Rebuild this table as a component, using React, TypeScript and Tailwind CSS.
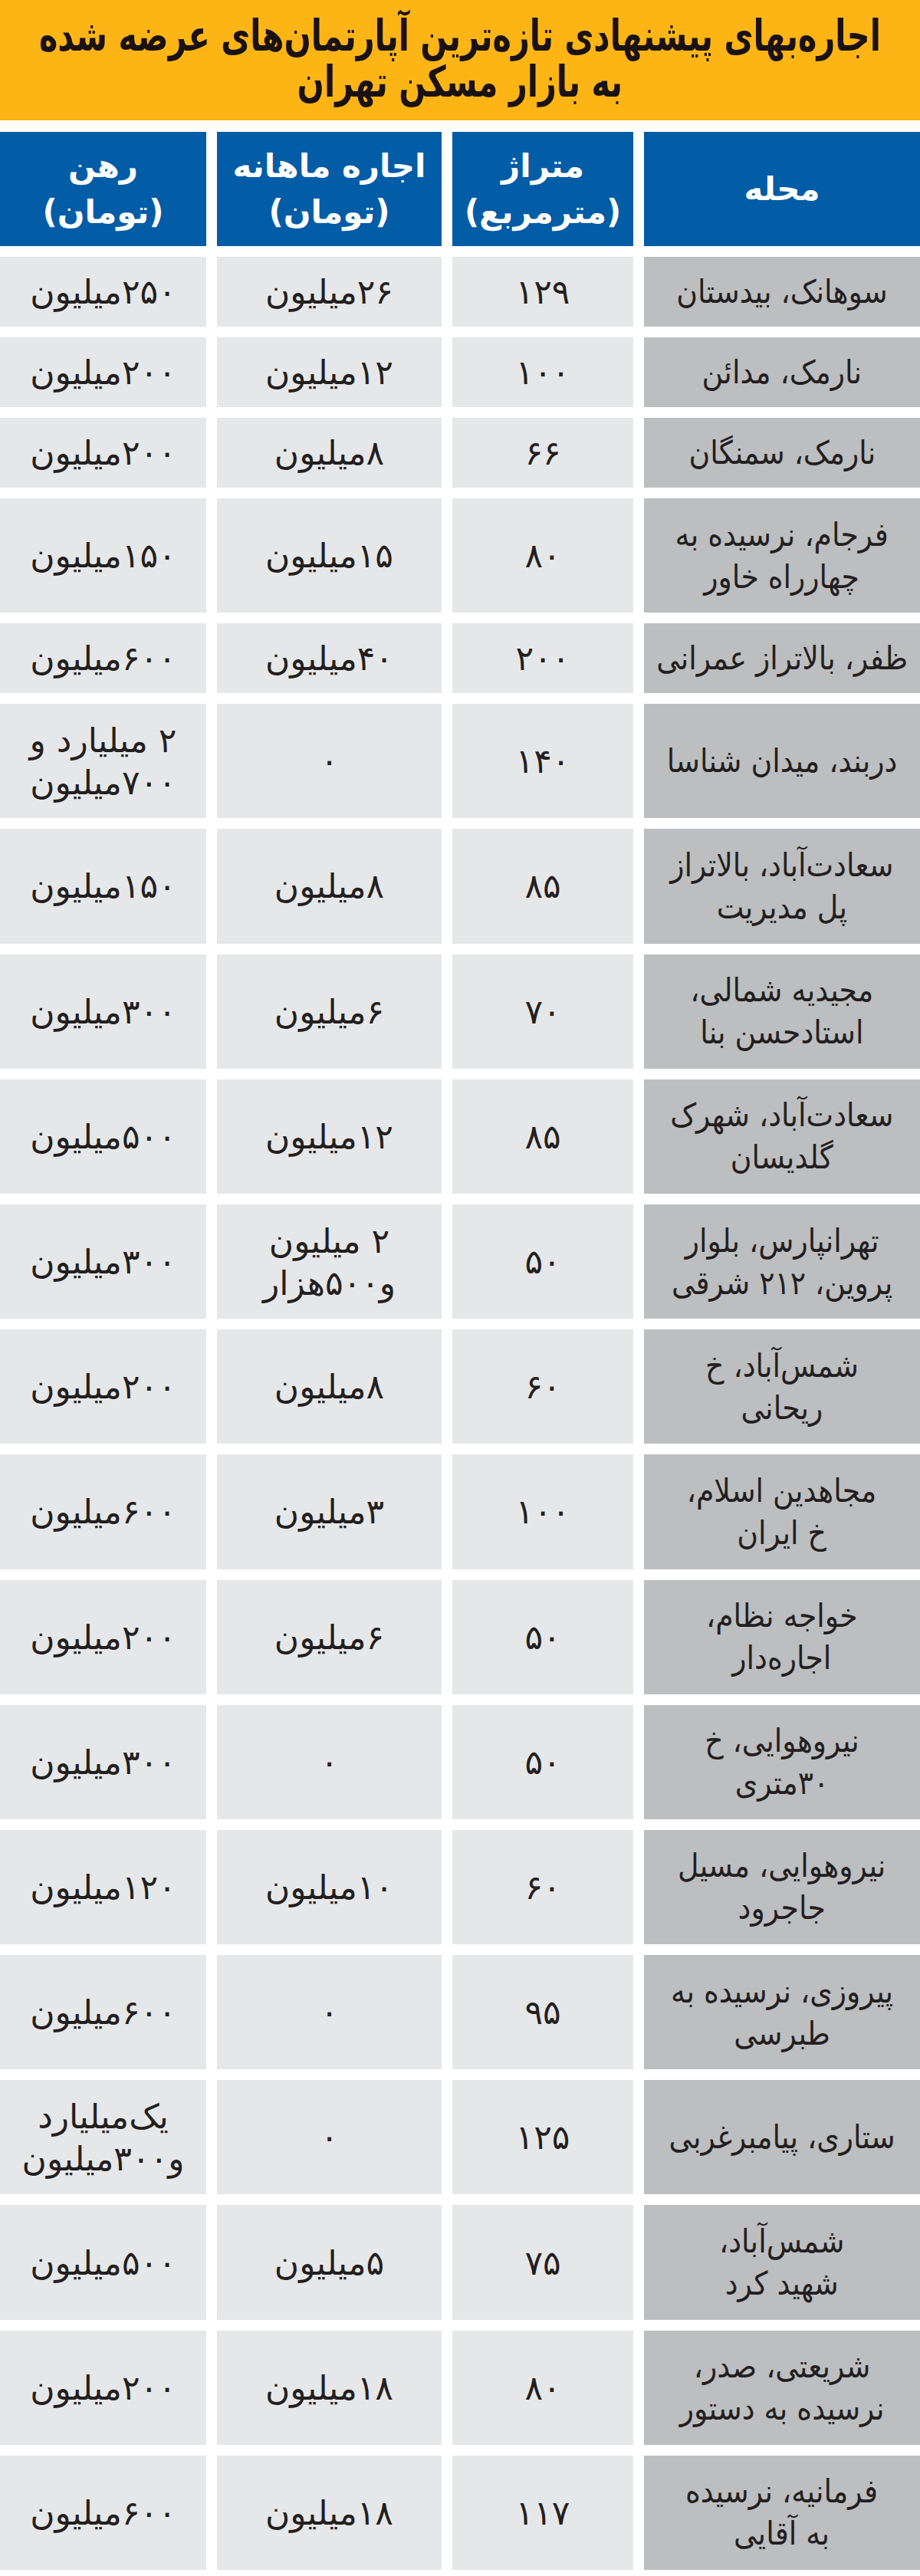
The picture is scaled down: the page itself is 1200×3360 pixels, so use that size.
import React from "react";

type Row = { rahn: string[]; ejare: string[]; metraj: string; mahalle: string[]; tall: boolean };

const rows: Row[] = [
  { rahn: ["۲۵۰میلیون"], ejare: ["۲۶میلیون"], metraj: "۱۲۹", mahalle: ["سوهانک، بیدستان"], tall: false },
  { rahn: ["۲۰۰میلیون"], ejare: ["۱۲میلیون"], metraj: "۱۰۰", mahalle: ["نارمک، مدائن"], tall: false },
  { rahn: ["۲۰۰میلیون"], ejare: ["۸میلیون"], metraj: "۶۶", mahalle: ["نارمک، سمنگان"], tall: false },
  { rahn: ["۱۵۰میلیون"], ejare: ["۱۵میلیون"], metraj: "۸۰", mahalle: ["فرجام، نرسیده به", "چهارراه خاور"], tall: true },
  { rahn: ["۶۰۰میلیون"], ejare: ["۴۰میلیون"], metraj: "۲۰۰", mahalle: ["ظفر، بالاتراز عمرانی"], tall: false },
  { rahn: ["۲ میلیارد و", "۷۰۰میلیون"], ejare: ["۰"], metraj: "۱۴۰", mahalle: ["دربند، میدان شناسا"], tall: true },
  { rahn: ["۱۵۰میلیون"], ejare: ["۸میلیون"], metraj: "۸۵", mahalle: ["سعادت‌آباد، بالاتراز", "پل مدیریت"], tall: true },
  { rahn: ["۳۰۰میلیون"], ejare: ["۶میلیون"], metraj: "۷۰", mahalle: ["مجیدیه شمالی،", "استادحسن بنا"], tall: true },
  { rahn: ["۵۰۰میلیون"], ejare: ["۱۲میلیون"], metraj: "۸۵", mahalle: ["سعادت‌آباد، شهرک", "گلدیسان"], tall: true },
  { rahn: ["۳۰۰میلیون"], ejare: ["۲ میلیون", "و۵۰۰هزار"], metraj: "۵۰", mahalle: ["تهرانپارس، بلوار", "پروین، ۲۱۲ شرقی"], tall: true },
  { rahn: ["۲۰۰میلیون"], ejare: ["۸میلیون"], metraj: "۶۰", mahalle: ["شمس‌آباد، خ", "ریحانی"], tall: true },
  { rahn: ["۶۰۰میلیون"], ejare: ["۳میلیون"], metraj: "۱۰۰", mahalle: ["مجاهدین اسلام،", "خ ایران"], tall: true },
  { rahn: ["۲۰۰میلیون"], ejare: ["۶میلیون"], metraj: "۵۰", mahalle: ["خواجه نظام،", "اجاره‌دار"], tall: true },
  { rahn: ["۳۰۰میلیون"], ejare: ["۰"], metraj: "۵۰", mahalle: ["نیروهوایی، خ", "۳۰متری"], tall: true },
  { rahn: ["۱۲۰میلیون"], ejare: ["۱۰میلیون"], metraj: "۶۰", mahalle: ["نیروهوایی، مسیل", "جاجرود"], tall: true },
  { rahn: ["۶۰۰میلیون"], ejare: ["۰"], metraj: "۹۵", mahalle: ["پیروزی، نرسیده به", "طبرسی"], tall: true },
  { rahn: ["یک‌میلیارد", "و۳۰۰میلیون"], ejare: ["۰"], metraj: "۱۲۵", mahalle: ["ستاری، پیامبرغربی"], tall: true },
  { rahn: ["۵۰۰میلیون"], ejare: ["۵میلیون"], metraj: "۷۵", mahalle: ["شمس‌آباد،", "شهید کرد"], tall: true },
  { rahn: ["۲۰۰میلیون"], ejare: ["۱۸میلیون"], metraj: "۸۰", mahalle: ["شریعتی، صدر،", "نرسیده به دستور"], tall: true },
  { rahn: ["۶۰۰میلیون"], ejare: ["۱۸میلیون"], metraj: "۱۱۷", mahalle: ["فرمانیه، نرسیده", "به آقایی"], tall: true },
];

function Lines({ lines, condensed }: { lines: string[]; condensed?: boolean }) {
  return (
    <div className={`flex flex-col items-center ${condensed ? "scale-x-[0.9]" : ""}`}>
      {lines.map((l, i) => (
        <span key={i} className="whitespace-nowrap">
          {l}
        </span>
      ))}
    </div>
  );
}

const headCell =
  "h-[149px] bg-[#035ca6] text-white font-bold text-[42px] leading-[60px] flex items-center justify-center";

export default function App() {
  return (
    <div dir="rtl" className="w-[1200px] bg-white font-['DejaVu_Sans',sans-serif] text-[#231f20]">
      <div className="h-[157px] bg-[#fdb515] flex flex-col items-center justify-center pb-[4px] font-bold text-[#1a1212] text-[56px] leading-[60px] overflow-hidden">
        <div className="whitespace-nowrap scale-x-[0.74]">اجاره‌بهای پیشنهادی تازه‌ترین آپارتمان‌های عرضه شده</div>
        <div className="whitespace-nowrap scale-x-[0.74]">به بازار مسکن تهران</div>
      </div>

      <div className="mt-[15px] grid grid-cols-[360px_236px_293px_269px] gap-x-[14px] gap-y-[14px]">
        <div className={headCell}>محله</div>
        <div className={headCell}>
          <Lines lines={["متراژ", "(مترمربع)"]} />
        </div>
        <div className={headCell}>
          <Lines lines={["اجاره ماهانه", "(تومان)"]} />
        </div>
        <div className={headCell}>
          <Lines lines={["رهن", "(تومان)"]} />
        </div>

        {rows.map((r, i) => (
          <React.Fragment key={i}>
            <div
              className={`${r.tall ? "h-[149.2px]" : "h-[91px]"} bg-[#bcbec0] flex items-center justify-center text-[42px] leading-[55px]`}
            >
              <Lines lines={r.mahalle} condensed />
            </div>
            <div
              className={`${r.tall ? "h-[149.2px]" : "h-[91px]"} bg-[#e6e7e8] flex items-center justify-center text-[44px] leading-[55px]`}
            >
              <Lines lines={[r.metraj]} />
            </div>
            <div
              className={`${r.tall ? "h-[149.2px]" : "h-[91px]"} bg-[#e6e7e8] flex items-center justify-center text-[44px] leading-[55px]`}
            >
              <Lines lines={r.ejare} />
            </div>
            <div
              className={`${r.tall ? "h-[149.2px]" : "h-[91px]"} bg-[#e6e7e8] flex items-center justify-center text-[44px] leading-[55px]`}
            >
              <Lines lines={r.rahn} />
            </div>
          </React.Fragment>
        ))}
      </div>
    </div>
  );
}
